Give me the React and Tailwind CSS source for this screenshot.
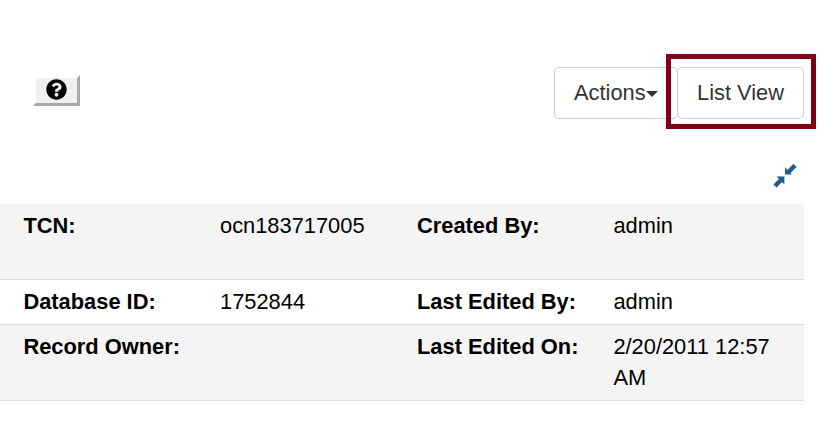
import React from 'react';
import { FaQuestionCircle } from 'react-icons/fa';

const rows = [
  { cells: ['TCN:', 'ocn183717005', 'Created By:', 'admin'], className: 'h-[76px] bg-[#f4f4f4]' },
  { cells: ['Database ID:', '1752844', 'Last Edited By:', 'admin'], className: 'h-[45px] bg-white' },
  { cells: ['Record Owner:', '', 'Last Edited On:', '2/20/2011 12:57 AM'], className: 'h-[76px] bg-[#f4f4f4]' },
];

function Row({ cells, className }) {
  return (
    <div className={`grid grid-cols-[197px_197px_196px_1fr] border-b border-[#dddddd] ${className}`}>
      {cells.map((text, i) => (
        <div
          key={i}
          className={`pt-[6px] pr-[8px] ${i === 0 || i === 3 ? 'pl-[23.4px]' : 'pl-[23px]'} ${i % 2 === 0 ? 'font-bold whitespace-nowrap' : ''}`}
        >
          {text}
        </div>
      ))}
    </div>
  );
}

export default function App() {
  return (
    <div className="relative w-[834px] h-[437px] overflow-hidden bg-white text-[21.85px] leading-[31px] text-black font-['Liberation_Sans',Arial,sans-serif]">
      {/* Toolbar */}
      <div className="flex items-start justify-between w-[804px] pt-[67px]">
        <button
          type="button"
          className="mt-[8px] ml-[33px] flex items-center justify-center w-[47px] h-[31px] bg-[#f0f0f0] border-[3px] border-t-white border-l-white border-r-[#a9a9a9] border-b-[#a9a9a9]"
        >
          <FaQuestionCircle size={21} className="text-black mb-[2px]" />
        </button>
        <div className="flex">
          <button
            type="button"
            className="flex items-center h-[52px] w-[124px] -mr-px pl-[19px] pb-[2px] bg-white border border-[#cccccc] rounded-[5px] text-[#333333]"
          >
            Actions
            <span className="w-0 h-0 mt-[3px] border-x-[6px] border-x-transparent border-t-[6px] border-t-[#333333]" />
          </button>
          <button
            type="button"
            className="relative h-[52px] w-[127px] pb-[2px] bg-white border border-[#cccccc] rounded-[5px] text-[#333333]"
          >
            List View
          </button>
        </div>
      </div>

      {/* Highlight around the active button */}
      <div className="absolute left-[666px] top-[54px] w-[150px] h-[75px] border-[5px] border-[#800018]" />

      {/* Collapse icon */}
      <div className="flex justify-end w-[804px] pt-[45px] pr-[7px] h-[85px]">
        <svg width="24" height="24" viewBox="0 0 24 24">
          <path d="M2 22 L8 16" stroke="#215b8a" strokeWidth="4.5" />
          <path d="M3.6 12.4 H11.4 V20.4 Z" fill="#215b8a" />
          <path d="M22 1.5 L15.5 8" stroke="#215b8a" strokeWidth="4.5" />
          <path d="M12 3.2 V10.4 H19 Z" fill="#215b8a" />
        </svg>
      </div>

      {/* Record details */}
      <div className="w-[804px]">
        {rows.map((row, i) => (
          <Row key={i} cells={row.cells} className={row.className} />
        ))}
      </div>
    </div>
  );
}
